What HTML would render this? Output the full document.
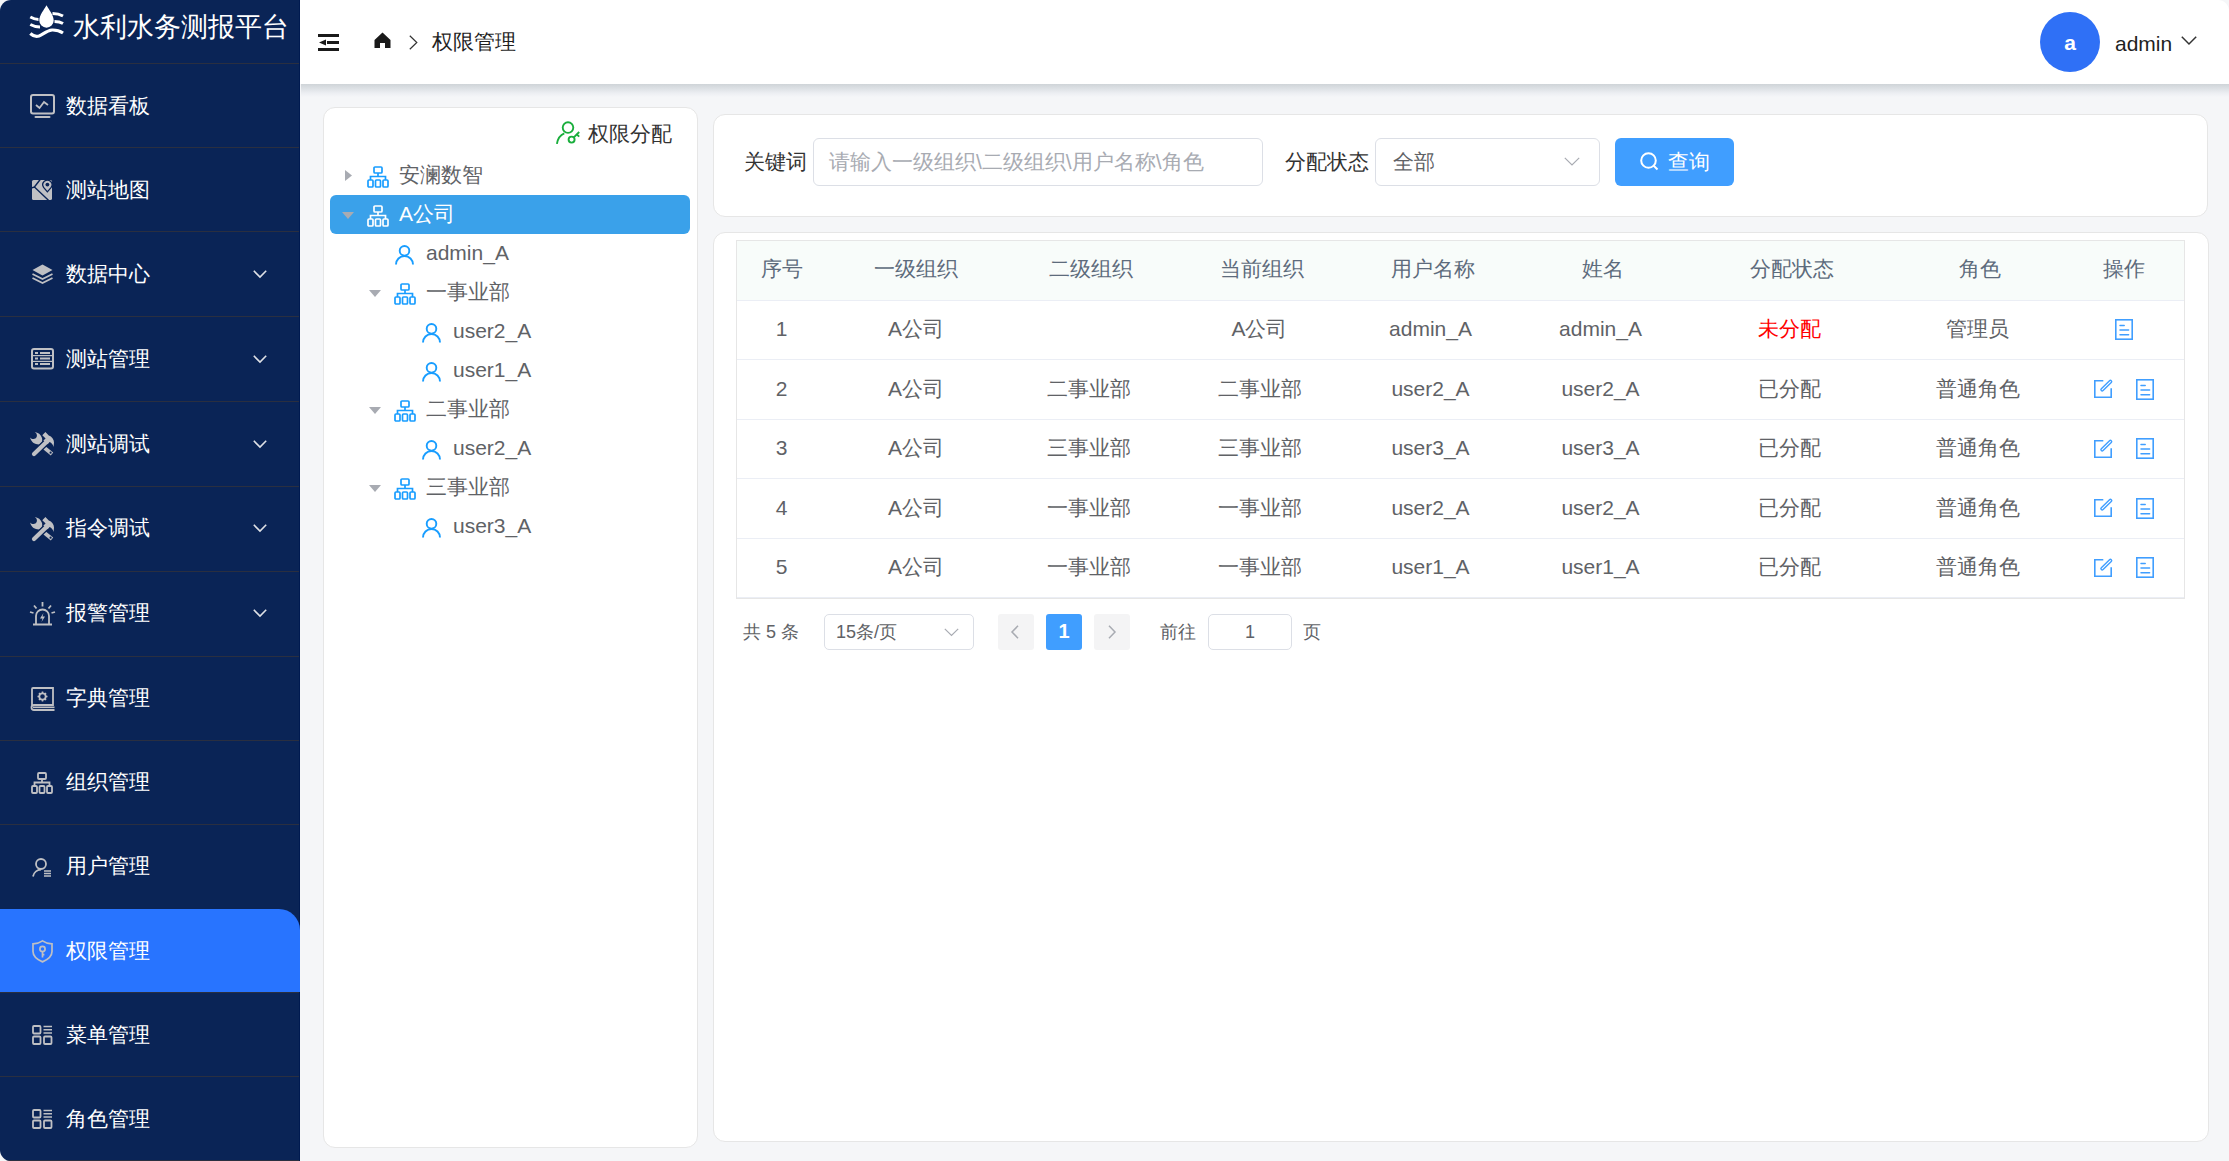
<!DOCTYPE html><html><head><meta charset="utf-8"><style>
*{box-sizing:border-box;margin:0;padding:0}
html,body{width:2229px;height:1161px;overflow:hidden;background:#f5f6f8;font-family:"Liberation Sans",sans-serif;}
#side{position:absolute;left:0;top:0;width:300px;height:1161px;background:#0a2456;border-radius:11px 0 0 11px;overflow:hidden}
#side .edge{position:absolute;right:0;top:0;width:1px;height:100%;background:#001a50}
.logo{position:absolute;left:30px;top:5px}
.title{position:absolute;left:73px;top:9px;font-size:27px;line-height:36px;color:#fff;white-space:nowrap}
.sep{position:absolute;left:0;width:299px;height:1px;background:#2a2f40}
.mi{position:absolute;left:0;width:299px;height:84px}
.mi .t{position:absolute;left:66px;top:0;line-height:84px;font-size:21px;color:#fff;white-space:nowrap}
.mi svg{position:absolute}
.mi.act{background:#2874ff;border-top-right-radius:21px;width:300px}
#hdr{position:absolute;left:300px;top:0;width:1929px;height:84px;background:#fff;border-top-right-radius:11px;}
#hsh{position:absolute;left:301px;top:84px;width:1928px;height:13px;background:linear-gradient(#cfd4d8,#dde1e5 35%,#eceef2 70%,#f5f6f8)}
.panel{position:absolute;background:#fff;border:1px solid #e6e6e6;border-radius:12px}
.tn{position:absolute;height:39px;line-height:39px;font-size:21px;color:#606266;white-space:nowrap}
.th{position:absolute;top:240px;height:60px;line-height:60px;font-size:21px;color:#606266;text-align:center;white-space:nowrap}
.td{position:absolute;height:59px;line-height:59px;font-size:21px;color:#606266;text-align:center;white-space:nowrap}
.hl{position:absolute;height:1px;background:#ebeef5}
.txt{position:absolute;white-space:nowrap}
svg{position:absolute;overflow:visible}
</style></head><body>
<div id="side"><div class="edge"></div>
<svg style="left:30px;top:5px" width="34" height="34" viewBox="0 0 34 34">
<path d="M16.5 0.3 C14 5 9.3 10 9.3 15.5 A7.2 7.2 0 0 0 23.7 15.5 C23.7 10 19 5 16.5 0.3Z" fill="#fff"/>
<path d="M0.3 12 C3 13.5 5.5 14.5 8.5 14.5" stroke="#fff" stroke-width="3" fill="none"/>
<path d="M0.3 19.5 C3 21 6 22 10 22" stroke="#fff" stroke-width="3" fill="none"/>
<path d="M22.5 8.5 C26 8.5 29.5 9 33 11" stroke="#fff" stroke-width="3" fill="none"/>
<path d="M24.5 16.5 C27.5 16.5 30.5 17 33 18.5" stroke="#fff" stroke-width="3" fill="none"/>
<path d="M0.3 28.5 C3 31 6 32 9 31 C13 29.5 16.5 25.5 22 25 C27 24.8 30 26 33 28" stroke="#fff" stroke-width="3.2" fill="none"/>
</svg>
<div class="title">水利水务测报平台</div>
<div class="sep" style="top:63.00px"></div>
<div class="mi" style="top:63.50px;height:83.56px"><div class="t" style="line-height:83.56px">数据看板</div></div>
<div class="sep" style="top:147.06px"></div>
<div class="mi" style="top:147.56px;height:83.56px"><div class="t" style="line-height:83.56px">测站地图</div></div>
<div class="sep" style="top:231.12px"></div>
<div class="mi" style="top:231.62px;height:84.44px"><div class="t" style="line-height:84.44px">数据中心</div></div>
<svg style="left:253px;top:269.62px" width="14" height="8" viewBox="0 0 14 8"><path d="M0.8 0.8 L7 7 L13.2 0.8" stroke="#dfe1e6" stroke-width="1.6" fill="none"/></svg>
<div class="sep" style="top:316.06px"></div>
<div class="mi" style="top:316.56px;height:84.44px"><div class="t" style="line-height:84.44px">测站管理</div></div>
<svg style="left:253px;top:354.56px" width="14" height="8" viewBox="0 0 14 8"><path d="M0.8 0.8 L7 7 L13.2 0.8" stroke="#dfe1e6" stroke-width="1.6" fill="none"/></svg>
<div class="sep" style="top:401.00px"></div>
<div class="mi" style="top:401.50px;height:84.44px"><div class="t" style="line-height:84.44px">测站调试</div></div>
<svg style="left:253px;top:439.50px" width="14" height="8" viewBox="0 0 14 8"><path d="M0.8 0.8 L7 7 L13.2 0.8" stroke="#dfe1e6" stroke-width="1.6" fill="none"/></svg>
<div class="sep" style="top:485.94px"></div>
<div class="mi" style="top:486.44px;height:84.44px"><div class="t" style="line-height:84.44px">指令调试</div></div>
<svg style="left:253px;top:524.44px" width="14" height="8" viewBox="0 0 14 8"><path d="M0.8 0.8 L7 7 L13.2 0.8" stroke="#dfe1e6" stroke-width="1.6" fill="none"/></svg>
<div class="sep" style="top:570.88px"></div>
<div class="mi" style="top:571.38px;height:84.44px"><div class="t" style="line-height:84.44px">报警管理</div></div>
<svg style="left:253px;top:609.38px" width="14" height="8" viewBox="0 0 14 8"><path d="M0.8 0.8 L7 7 L13.2 0.8" stroke="#dfe1e6" stroke-width="1.6" fill="none"/></svg>
<div class="sep" style="top:655.82px"></div>
<div class="mi" style="top:656.32px;height:83.56px"><div class="t" style="line-height:83.56px">字典管理</div></div>
<div class="sep" style="top:739.88px"></div>
<div class="mi" style="top:740.38px;height:83.56px"><div class="t" style="line-height:83.56px">组织管理</div></div>
<div class="sep" style="top:823.94px"></div>
<div class="mi" style="top:824.44px;height:83.56px"><div class="t" style="line-height:83.56px">用户管理</div></div>
<div class="mi act" style="top:908.50px;height:83.56px"><div class="t" style="line-height:83.56px">权限管理</div></div>
<div class="sep" style="top:992.06px"></div>
<div class="mi" style="top:992.56px;height:83.56px"><div class="t" style="line-height:83.56px">菜单管理</div></div>
<div class="sep" style="top:1076.12px"></div>
<div class="mi" style="top:1076.62px;height:83.56px"><div class="t" style="line-height:83.56px">角色管理</div></div>
<div class="sep" style="top:1160.18px"></div>
<svg style="left:30px;top:94px" width="25" height="25" viewBox="0 0 25 25">
<rect x="1" y="1" width="23" height="18.5" rx="2" stroke="#bfc0c4" stroke-width="2" fill="none"/>
<path d="M6 11 L9.5 14 L14 8 L18 11" stroke="#bfc0c4" stroke-width="1.8" fill="none"/>
<rect x="4.5" y="22" width="16" height="2" rx="1" fill="#bfc0c4"/></svg>
<svg style="left:32px;top:180px" width="20" height="20" viewBox="0 0 20 20">
<rect x="0" y="0" width="20" height="20" rx="1.6" fill="#bfc0c4"/>
<path d="M8.6 -1 L2.4 7 L17.2 21 M2.4 7 L-1 8.2" stroke="#0a2456" stroke-width="1.4" fill="none"/>
<path d="M15.4 11.8 L11.6 7.4 A4.6 4.6 0 1 1 19.2 7.4 Z" fill="#bfc0c4" stroke="#0a2456" stroke-width="1.3"/>
<circle cx="15.4" cy="4.6" r="1.9" fill="#0a2456"/></svg>
<svg style="left:32px;top:264px" width="21" height="20" viewBox="0 0 21 20">
<path d="M10.5 0.5 L20.5 6 L10.5 11.5 L0.5 6Z" fill="#bfc0c4"/>
<path d="M0.5 10 L10.5 15 L20.5 10" stroke="#bfc0c4" stroke-width="1.8" fill="none"/>
<path d="M0.5 14 L10.5 19 L20.5 14" stroke="#bfc0c4" stroke-width="1.8" fill="none"/></svg>
<svg style="left:31px;top:348px" width="23" height="22" viewBox="0 0 23 22">
<rect x="1" y="1" width="21" height="19.5" rx="2" stroke="#bfc0c4" stroke-width="2" fill="none"/>
<rect x="4" y="4" width="3" height="2" fill="#bfc0c4"/><rect x="9" y="4" width="10" height="2" fill="#bfc0c4"/>
<rect x="4" y="9.5" width="3" height="2" fill="#bfc0c4"/><rect x="9" y="9.5" width="10" height="2" fill="#bfc0c4"/>
<rect x="4" y="15" width="3" height="2" fill="#bfc0c4"/><rect x="9" y="15" width="10" height="2" fill="#bfc0c4"/>
<rect x="1" y="7" width="21" height="1.2" fill="#bfc0c4"/><rect x="1" y="12.8" width="21" height="1.2" fill="#bfc0c4"/></svg>
<svg style="left:30px;top:432px" width="24" height="24" viewBox="0 0 24 24">
<path d="M0 5.5 C1.5 7 3.5 7.6 5.4 6.6 C7 5.6 7.4 3.4 6.4 1.6 L4.8 0 C8 0.4 11 2.6 12 6 C12.4 8 12.2 9.4 11.6 10.6 L9.2 12.4 C5.6 12.6 1.6 11 0 5.5Z" fill="#bfc0c4"/>
<path d="M14.2 13.2 L23.2 20.6 L20.8 23.6 L11.6 16Z" fill="#bfc0c4"/>
<circle cx="20.6" cy="20.7" r="1.1" fill="#0a2456"/>
<path d="M4 22 L17 9.5" stroke="#0a2456" stroke-width="6.6" stroke-linecap="round"/>
<path d="M4 22 L17 9.5" stroke="#bfc0c4" stroke-width="4.2" stroke-linecap="round"/>
<path d="M12.3 3.2 L15.4 0.1 L18.8 3.4 C21.8 4.6 24 7 24 10.5 L23.6 15 C23 12.6 21.6 10.8 19.6 10 L17.6 12.2 L13.4 8.6 L15.6 6.4 Z" fill="#bfc0c4"/>
</svg>
<svg style="left:30px;top:517px" width="24" height="24" viewBox="0 0 24 24">
<path d="M0 5.5 C1.5 7 3.5 7.6 5.4 6.6 C7 5.6 7.4 3.4 6.4 1.6 L4.8 0 C8 0.4 11 2.6 12 6 C12.4 8 12.2 9.4 11.6 10.6 L9.2 12.4 C5.6 12.6 1.6 11 0 5.5Z" fill="#bfc0c4"/>
<path d="M14.2 13.2 L23.2 20.6 L20.8 23.6 L11.6 16Z" fill="#bfc0c4"/>
<circle cx="20.6" cy="20.7" r="1.1" fill="#0a2456"/>
<path d="M4 22 L17 9.5" stroke="#0a2456" stroke-width="6.6" stroke-linecap="round"/>
<path d="M4 22 L17 9.5" stroke="#bfc0c4" stroke-width="4.2" stroke-linecap="round"/>
<path d="M12.3 3.2 L15.4 0.1 L18.8 3.4 C21.8 4.6 24 7 24 10.5 L23.6 15 C23 12.6 21.6 10.8 19.6 10 L17.6 12.2 L13.4 8.6 L15.6 6.4 Z" fill="#bfc0c4"/>
</svg>
<svg style="left:30px;top:602px" width="25" height="24" viewBox="0 0 25 24">
<path d="M6 22 V14 A6.5 6.5 0 0 1 19 14 V22" stroke="#bfc0c4" stroke-width="1.8" fill="none"/>
<rect x="3" y="21.5" width="19" height="2" fill="#bfc0c4"/>
<path d="M13.5 11 L10 16.5 H12.5 L11.5 20 L15 14.5 H12.5Z" fill="#bfc0c4"/>
<rect x="11.6" y="0" width="1.8" height="4.5" fill="#bfc0c4"/>
<path d="M4 3.5 L6.5 6.5 M21 3.5 L18.5 6.5 M0 10 L3.5 11 M25 10 L21.5 11" stroke="#bfc0c4" stroke-width="1.8"/></svg>
<svg style="left:30px;top:687px" width="25" height="24" viewBox="0 0 25 24">
<path d="M2 19 V2 A1 1 0 0 1 3 1 H23 V18 H4 A2.5 2.5 0 0 0 4 23 H24.5" stroke="#bfc0c4" stroke-width="1.8" fill="none"/>
<rect x="3" y="19.5" width="21.5" height="1.6" fill="#bfc0c4"/>
<circle cx="12.5" cy="9.5" r="3.2" stroke="#bfc0c4" stroke-width="1.8" fill="none"/>
<path d="M12.5 4.5 V6 M12.5 13 V14.5 M7.5 9.5 H9 M16 9.5 H17.5 M9 6 L10 7 M15 12 L16 13 M16 6 L15 7 M10 12 L9 13" stroke="#bfc0c4" stroke-width="1.6"/></svg>
<svg style="left:31px;top:772px" width="22.0" height="22.0" viewBox="0 0 22 22">
<rect x="7" y="1" width="8" height="6" rx="1" stroke="#bfc0c4" stroke-width="1.8" fill="none"/>
<path d="M11 7 V10.5 M3.5 14 V10.5 H18.5 V14" stroke="#bfc0c4" stroke-width="1.8" fill="none"/>
<rect x="1" y="14" width="5" height="7" rx="1" stroke="#bfc0c4" stroke-width="1.8" fill="none"/>
<rect x="8.5" y="14" width="5" height="7" rx="1" stroke="#bfc0c4" stroke-width="1.8" fill="none"/>
<rect x="16" y="14" width="5" height="7" rx="1" stroke="#bfc0c4" stroke-width="1.8" fill="none"/></svg>
<svg style="left:32px;top:858px" width="20" height="19" viewBox="0 0 20 19">
<circle cx="9" cy="6" r="5" stroke="#bfc0c4" stroke-width="1.8" fill="none"/>
<path d="M1 18.5 A8.5 8.5 0 0 1 9 11.5" stroke="#bfc0c4" stroke-width="1.8" fill="none"/>
<path d="M12 13 H19 M12 15.5 H19 M12 18 H19" stroke="#bfc0c4" stroke-width="1.5"/></svg>
<svg style="left:32px;top:940px" width="21" height="23" viewBox="0 0 21 23">
<path d="M10.5 0.9 C8 2.7 5 3.7 1 3.9 V11.5 C1 16 5 19.5 10.5 21.9 C16 19.5 20 16 20 11.5 V3.9 C16 3.7 13 2.7 10.5 0.9Z" stroke="#bfc0c4" stroke-width="1.7" fill="none"/>
<circle cx="10.5" cy="8.9" r="2.6" stroke="#bfc0c4" stroke-width="1.7" fill="none"/>
<path d="M10.5 11.5 V17.6 M10.5 14.6 H12.4" stroke="#bfc0c4" stroke-width="1.7"/></svg>
<svg style="left:32px;top:1025px" width="21" height="20" viewBox="0 0 21 20">
<rect x="1" y="1" width="7.5" height="7.5" rx="1" stroke="#bfc0c4" stroke-width="1.8" fill="none"/>
<rect x="1" y="11.5" width="7.5" height="7.5" rx="1" stroke="#bfc0c4" stroke-width="1.8" fill="none"/>
<rect x="12" y="11.5" width="7.5" height="7.5" rx="1" stroke="#bfc0c4" stroke-width="1.8" fill="none"/>
<path d="M11.5 1.5 H20 M11.5 4.8 H20 M11.5 8 H20" stroke="#bfc0c4" stroke-width="1.6"/></svg>
<svg style="left:32px;top:1109px" width="21" height="20" viewBox="0 0 21 20">
<rect x="1" y="1" width="7.5" height="7.5" rx="1" stroke="#bfc0c4" stroke-width="1.8" fill="none"/>
<rect x="1" y="11.5" width="7.5" height="7.5" rx="1" stroke="#bfc0c4" stroke-width="1.8" fill="none"/>
<rect x="12" y="11.5" width="7.5" height="7.5" rx="1" stroke="#bfc0c4" stroke-width="1.8" fill="none"/>
<path d="M11.5 1.5 H20 M11.5 4.8 H20 M11.5 8 H20" stroke="#bfc0c4" stroke-width="1.6"/></svg>
</div>
<div id="hsh"></div><div id="hdr"></div>
<svg style="left:318px;top:34px" width="22" height="17" viewBox="0 0 22 17">
<rect x="0" y="0" width="21" height="3" fill="#1a1a1a"/>
<rect x="9" y="7" width="12" height="3" fill="#1a1a1a"/>
<path d="M1 8.5 L8 5.5 V11.5Z" fill="#1a1a1a"/>
<rect x="0" y="14" width="21" height="3" fill="#1a1a1a"/></svg>
<svg style="left:374px;top:32px" width="17" height="17" viewBox="0 0 17 17">
<path d="M8.5 0.5 L16.5 8 V16 H11 V11 H6 V16 H0.5 V8Z" fill="#1a1a1a"/></svg>
<svg style="left:409px;top:35px" width="9" height="15" viewBox="0 0 9 15">
<path d="M0.8 0.8 L7.8 7.5 L0.8 14.2" stroke="#333" stroke-width="1.2" fill="none"/></svg>
<div class="txt" style="left:432px;top:27px;font-size:21px;line-height:30px;color:#1f1f1f">权限管理</div>
<div style="position:absolute;left:2040px;top:12px;width:60px;height:60px;border-radius:50%;background:#2f70f6"></div>
<div class="txt" style="left:2040px;width:60px;text-align:center;top:28px;font-size:21px;line-height:30px;color:#fff;font-weight:bold">a</div>
<div class="txt" style="left:2115px;top:29px;font-size:21px;line-height:30px;color:#1f1f1f">admin</div>
<svg style="left:2181px;top:36px" width="16" height="9" viewBox="0 0 16 9">
<path d="M0.8 0.8 L8 8 L15.2 0.8" stroke="#333" stroke-width="1.5" fill="none"/></svg>
<div class="panel" style="left:323px;top:107px;width:375px;height:1041px"></div>
<svg style="left:556px;top:121px" width="25" height="24" viewBox="0 0 25 24">
<circle cx="12" cy="6.6" r="5.3" stroke="#19ae3c" stroke-width="1.9" fill="none"/>
<path d="M0.9 22.8 C1.8 17.5 4.5 13.8 8.3 12.3" stroke="#19ae3c" stroke-width="1.9" fill="none"/>
<circle cx="15.6" cy="18.6" r="3" stroke="#19ae3c" stroke-width="1.9" fill="none"/>
<path d="M17.8 16.4 L23.2 11 M21 13.6 L23.2 15.6" stroke="#19ae3c" stroke-width="1.9" fill="none"/></svg>
<div class="txt" style="left:588px;top:119px;font-size:21px;line-height:30px;color:#333">权限分配</div>
<div style="position:absolute;left:330px;top:195px;width:360px;height:39px;border-radius:6px;background:#3aa1ea"></div>
<svg style="left:345px;top:170.0px" width="7" height="11" viewBox="0 0 7 11"><path d="M0 0 V11 L7 5.5Z" fill="#a8abb2"/></svg>
<svg style="left:367px;top:166px" width="22.0" height="22.0" viewBox="0 0 22 22">
<rect x="7" y="1" width="8" height="6" rx="1" stroke="#189dff" stroke-width="1.7" fill="none"/>
<path d="M11 7 V10.5 M3.5 14 V10.5 H18.5 V14" stroke="#189dff" stroke-width="1.7" fill="none"/>
<rect x="1" y="14" width="5" height="7" rx="1" stroke="#189dff" stroke-width="1.7" fill="none"/>
<rect x="8.5" y="14" width="5" height="7" rx="1" stroke="#189dff" stroke-width="1.7" fill="none"/>
<rect x="16" y="14" width="5" height="7" rx="1" stroke="#189dff" stroke-width="1.7" fill="none"/></svg>
<div class="txt" style="left:399px;top:160px;font-size:21px;line-height:30px;color:#606266">安澜数智</div>
<svg style="left:342px;top:212.0px" width="12" height="7" viewBox="0 0 12 7"><path d="M0 0 H12 L6 7Z" fill="#a8abb2"/></svg>
<svg style="left:367px;top:205px" width="22.0" height="22.0" viewBox="0 0 22 22">
<rect x="7" y="1" width="8" height="6" rx="1" stroke="#fff" stroke-width="1.7" fill="none"/>
<path d="M11 7 V10.5 M3.5 14 V10.5 H18.5 V14" stroke="#fff" stroke-width="1.7" fill="none"/>
<rect x="1" y="14" width="5" height="7" rx="1" stroke="#fff" stroke-width="1.7" fill="none"/>
<rect x="8.5" y="14" width="5" height="7" rx="1" stroke="#fff" stroke-width="1.7" fill="none"/>
<rect x="16" y="14" width="5" height="7" rx="1" stroke="#fff" stroke-width="1.7" fill="none"/></svg>
<div class="txt" style="left:399px;top:199px;font-size:21px;line-height:30px;color:#fff">A公司</div>
<svg style="left:395px;top:244.5px" width="19" height="20" viewBox="0 0 19 20">
<circle cx="9.5" cy="5.8" r="4.8" stroke="#189dff" stroke-width="1.9" fill="none"/>
<path d="M1 19.5 A8.5 8.5 0 0 1 18 19.5" stroke="#189dff" stroke-width="1.9" fill="none"/></svg>
<div class="txt" style="left:426px;top:238px;font-size:21px;line-height:30px;color:#606266">admin_A</div>
<svg style="left:369px;top:290.0px" width="12" height="7" viewBox="0 0 12 7"><path d="M0 0 H12 L6 7Z" fill="#a8abb2"/></svg>
<svg style="left:394px;top:283px" width="22.0" height="22.0" viewBox="0 0 22 22">
<rect x="7" y="1" width="8" height="6" rx="1" stroke="#189dff" stroke-width="1.7" fill="none"/>
<path d="M11 7 V10.5 M3.5 14 V10.5 H18.5 V14" stroke="#189dff" stroke-width="1.7" fill="none"/>
<rect x="1" y="14" width="5" height="7" rx="1" stroke="#189dff" stroke-width="1.7" fill="none"/>
<rect x="8.5" y="14" width="5" height="7" rx="1" stroke="#189dff" stroke-width="1.7" fill="none"/>
<rect x="16" y="14" width="5" height="7" rx="1" stroke="#189dff" stroke-width="1.7" fill="none"/></svg>
<div class="txt" style="left:426px;top:277px;font-size:21px;line-height:30px;color:#606266">一事业部</div>
<svg style="left:422px;top:322.5px" width="19" height="20" viewBox="0 0 19 20">
<circle cx="9.5" cy="5.8" r="4.8" stroke="#189dff" stroke-width="1.9" fill="none"/>
<path d="M1 19.5 A8.5 8.5 0 0 1 18 19.5" stroke="#189dff" stroke-width="1.9" fill="none"/></svg>
<div class="txt" style="left:453px;top:316px;font-size:21px;line-height:30px;color:#606266">user2_A</div>
<svg style="left:422px;top:361.5px" width="19" height="20" viewBox="0 0 19 20">
<circle cx="9.5" cy="5.8" r="4.8" stroke="#189dff" stroke-width="1.9" fill="none"/>
<path d="M1 19.5 A8.5 8.5 0 0 1 18 19.5" stroke="#189dff" stroke-width="1.9" fill="none"/></svg>
<div class="txt" style="left:453px;top:355px;font-size:21px;line-height:30px;color:#606266">user1_A</div>
<svg style="left:369px;top:407.0px" width="12" height="7" viewBox="0 0 12 7"><path d="M0 0 H12 L6 7Z" fill="#a8abb2"/></svg>
<svg style="left:394px;top:400px" width="22.0" height="22.0" viewBox="0 0 22 22">
<rect x="7" y="1" width="8" height="6" rx="1" stroke="#189dff" stroke-width="1.7" fill="none"/>
<path d="M11 7 V10.5 M3.5 14 V10.5 H18.5 V14" stroke="#189dff" stroke-width="1.7" fill="none"/>
<rect x="1" y="14" width="5" height="7" rx="1" stroke="#189dff" stroke-width="1.7" fill="none"/>
<rect x="8.5" y="14" width="5" height="7" rx="1" stroke="#189dff" stroke-width="1.7" fill="none"/>
<rect x="16" y="14" width="5" height="7" rx="1" stroke="#189dff" stroke-width="1.7" fill="none"/></svg>
<div class="txt" style="left:426px;top:394px;font-size:21px;line-height:30px;color:#606266">二事业部</div>
<svg style="left:422px;top:439.5px" width="19" height="20" viewBox="0 0 19 20">
<circle cx="9.5" cy="5.8" r="4.8" stroke="#189dff" stroke-width="1.9" fill="none"/>
<path d="M1 19.5 A8.5 8.5 0 0 1 18 19.5" stroke="#189dff" stroke-width="1.9" fill="none"/></svg>
<div class="txt" style="left:453px;top:433px;font-size:21px;line-height:30px;color:#606266">user2_A</div>
<svg style="left:369px;top:485.0px" width="12" height="7" viewBox="0 0 12 7"><path d="M0 0 H12 L6 7Z" fill="#a8abb2"/></svg>
<svg style="left:394px;top:478px" width="22.0" height="22.0" viewBox="0 0 22 22">
<rect x="7" y="1" width="8" height="6" rx="1" stroke="#189dff" stroke-width="1.7" fill="none"/>
<path d="M11 7 V10.5 M3.5 14 V10.5 H18.5 V14" stroke="#189dff" stroke-width="1.7" fill="none"/>
<rect x="1" y="14" width="5" height="7" rx="1" stroke="#189dff" stroke-width="1.7" fill="none"/>
<rect x="8.5" y="14" width="5" height="7" rx="1" stroke="#189dff" stroke-width="1.7" fill="none"/>
<rect x="16" y="14" width="5" height="7" rx="1" stroke="#189dff" stroke-width="1.7" fill="none"/></svg>
<div class="txt" style="left:426px;top:472px;font-size:21px;line-height:30px;color:#606266">三事业部</div>
<svg style="left:422px;top:517.5px" width="19" height="20" viewBox="0 0 19 20">
<circle cx="9.5" cy="5.8" r="4.8" stroke="#189dff" stroke-width="1.9" fill="none"/>
<path d="M1 19.5 A8.5 8.5 0 0 1 18 19.5" stroke="#189dff" stroke-width="1.9" fill="none"/></svg>
<div class="txt" style="left:453px;top:511px;font-size:21px;line-height:30px;color:#606266">user3_A</div>
<div class="panel" style="left:713px;top:114px;width:1495px;height:103px"></div>
<div class="txt" style="left:744px;top:147px;font-size:21px;line-height:30px;color:#333">关键词</div>
<div style="position:absolute;left:813px;top:138px;width:450px;height:48px;border:1.5px solid #dcdfe6;border-radius:6px"></div>
<div class="txt" style="left:829px;top:147px;font-size:21px;line-height:30px;color:#a8abb2">请输入一级组织\二级组织\用户名称\角色</div>
<div class="txt" style="left:1285px;top:147px;font-size:21px;line-height:30px;color:#333">分配状态</div>
<div style="position:absolute;left:1375px;top:138px;width:225px;height:48px;border:1.5px solid #dcdfe6;border-radius:6px"></div>
<div class="txt" style="left:1393px;top:147px;font-size:21px;line-height:30px;color:#606266">全部</div>
<svg style="left:1564px;top:157px" width="16" height="9" viewBox="0 0 16 9"><path d="M0.8 0.8 L8 8 L15.2 0.8" stroke="#a8abb2" stroke-width="1.2" fill="none"/></svg>
<div style="position:absolute;left:1615px;top:138px;width:119px;height:48px;border-radius:6px;background:#409eff"></div>
<svg style="left:1640px;top:152px" width="19" height="19" viewBox="0 0 19 19"><circle cx="8.5" cy="8.5" r="7.3" stroke="#fff" stroke-width="2" fill="none"/><path d="M13.5 13.5 L17.5 17.5" stroke="#fff" stroke-width="2"/></svg>
<div class="txt" style="left:1668px;top:147px;font-size:21px;line-height:30px;color:#fff">查询</div>
<div class="panel" style="left:713px;top:232px;width:1496px;height:910px"></div>
<div style="position:absolute;left:736px;top:240px;width:1449px;height:359px;border:1px solid #e6e6e6"></div>
<div style="position:absolute;left:737px;top:241px;width:1447px;height:59px;background:#f8fcfa"></div>
<div class="txt" style="left:681.5px;width:200px;text-align:center;top:254px;font-size:21px;line-height:30px;color:#5d6b7c">序号</div>
<div class="txt" style="left:816.0px;width:200px;text-align:center;top:254px;font-size:21px;line-height:30px;color:#5d6b7c">一级组织</div>
<div class="txt" style="left:990.5px;width:200px;text-align:center;top:254px;font-size:21px;line-height:30px;color:#5d6b7c">二级组织</div>
<div class="txt" style="left:1161.5px;width:200px;text-align:center;top:254px;font-size:21px;line-height:30px;color:#5d6b7c">当前组织</div>
<div class="txt" style="left:1332.5px;width:200px;text-align:center;top:254px;font-size:21px;line-height:30px;color:#5d6b7c">用户名称</div>
<div class="txt" style="left:1502.5px;width:200px;text-align:center;top:254px;font-size:21px;line-height:30px;color:#5d6b7c">姓名</div>
<div class="txt" style="left:1691.5px;width:200px;text-align:center;top:254px;font-size:21px;line-height:30px;color:#5d6b7c">分配状态</div>
<div class="txt" style="left:1879.5px;width:200px;text-align:center;top:254px;font-size:21px;line-height:30px;color:#5d6b7c">角色</div>
<div class="txt" style="left:2024.0px;width:200px;text-align:center;top:254px;font-size:21px;line-height:30px;color:#5d6b7c">操作</div>
<div class="hl" style="left:737px;width:1447px;top:300.0px"></div>
<div class="hl" style="left:737px;width:1447px;top:359.0px"></div>
<div class="hl" style="left:737px;width:1447px;top:418.5px"></div>
<div class="hl" style="left:737px;width:1447px;top:478.0px"></div>
<div class="hl" style="left:737px;width:1447px;top:537.5px"></div>
<div class="hl" style="left:737px;width:1447px;top:597.0px"></div>
<div class="txt" style="left:681.5px;width:200px;text-align:center;top:314.0px;font-size:21px;line-height:30px;color:#606266">1</div>
<div class="txt" style="left:816.0px;width:200px;text-align:center;top:314.0px;font-size:21px;line-height:30px;color:#606266">A公司</div>
<div class="txt" style="left:988.5px;width:200px;text-align:center;top:314.0px;font-size:21px;line-height:30px;color:#606266"></div>
<div class="txt" style="left:1159.5px;width:200px;text-align:center;top:314.0px;font-size:21px;line-height:30px;color:#606266">A公司</div>
<div class="txt" style="left:1330.5px;width:200px;text-align:center;top:314.0px;font-size:21px;line-height:30px;color:#606266">admin_A</div>
<div class="txt" style="left:1500.5px;width:200px;text-align:center;top:314.0px;font-size:21px;line-height:30px;color:#606266">admin_A</div>
<div class="txt" style="left:1689.5px;width:200px;text-align:center;top:314.0px;font-size:21px;line-height:30px;color:#f00">未分配</div>
<div class="txt" style="left:1877.5px;width:200px;text-align:center;top:314.0px;font-size:21px;line-height:30px;color:#606266">管理员</div>
<svg style="left:2115px;top:319.4px" width="18" height="21" viewBox="0 0 18 21">
<rect x="0.8" y="0.8" width="16.4" height="19.4" stroke="#409eff" stroke-width="1.6" fill="none"/>
<path d="M5 6.6 H9.2 M5 11 H13.6 M5 15.7 H13.6" stroke="#409eff" stroke-width="1.5" stroke-linecap="round"/></svg>
<div class="txt" style="left:681.5px;width:200px;text-align:center;top:373.5px;font-size:21px;line-height:30px;color:#606266">2</div>
<div class="txt" style="left:816.0px;width:200px;text-align:center;top:373.5px;font-size:21px;line-height:30px;color:#606266">A公司</div>
<div class="txt" style="left:988.5px;width:200px;text-align:center;top:373.5px;font-size:21px;line-height:30px;color:#606266">二事业部</div>
<div class="txt" style="left:1159.5px;width:200px;text-align:center;top:373.5px;font-size:21px;line-height:30px;color:#606266">二事业部</div>
<div class="txt" style="left:1330.5px;width:200px;text-align:center;top:373.5px;font-size:21px;line-height:30px;color:#606266">user2_A</div>
<div class="txt" style="left:1500.5px;width:200px;text-align:center;top:373.5px;font-size:21px;line-height:30px;color:#606266">user2_A</div>
<div class="txt" style="left:1689.5px;width:200px;text-align:center;top:373.5px;font-size:21px;line-height:30px;color:#606266">已分配</div>
<div class="txt" style="left:1877.5px;width:200px;text-align:center;top:373.5px;font-size:21px;line-height:30px;color:#606266">普通角色</div>
<svg style="left:2094px;top:380.1px" width="19" height="19" viewBox="0 0 19 19">
<path d="M9.3 0.8 H0.8 V17.2 H17.2 V8.3" stroke="#409eff" stroke-width="1.6" fill="none"/>
<path d="M8.2 9.6 L16.4 1.6" stroke="#409eff" stroke-width="3.9" stroke-linecap="round"/>
<path d="M8.2 9.6 L16.4 1.6" stroke="#fff" stroke-width="1.1" stroke-linecap="round"/></svg>
<svg style="left:2136px;top:378.7px" width="18" height="21" viewBox="0 0 18 21">
<rect x="0.8" y="0.8" width="16.4" height="19.4" stroke="#409eff" stroke-width="1.6" fill="none"/>
<path d="M5 6.6 H9.2 M5 11 H13.6 M5 15.7 H13.6" stroke="#409eff" stroke-width="1.5" stroke-linecap="round"/></svg>
<div class="txt" style="left:681.5px;width:200px;text-align:center;top:433.0px;font-size:21px;line-height:30px;color:#606266">3</div>
<div class="txt" style="left:816.0px;width:200px;text-align:center;top:433.0px;font-size:21px;line-height:30px;color:#606266">A公司</div>
<div class="txt" style="left:988.5px;width:200px;text-align:center;top:433.0px;font-size:21px;line-height:30px;color:#606266">三事业部</div>
<div class="txt" style="left:1159.5px;width:200px;text-align:center;top:433.0px;font-size:21px;line-height:30px;color:#606266">三事业部</div>
<div class="txt" style="left:1330.5px;width:200px;text-align:center;top:433.0px;font-size:21px;line-height:30px;color:#606266">user3_A</div>
<div class="txt" style="left:1500.5px;width:200px;text-align:center;top:433.0px;font-size:21px;line-height:30px;color:#606266">user3_A</div>
<div class="txt" style="left:1689.5px;width:200px;text-align:center;top:433.0px;font-size:21px;line-height:30px;color:#606266">已分配</div>
<div class="txt" style="left:1877.5px;width:200px;text-align:center;top:433.0px;font-size:21px;line-height:30px;color:#606266">普通角色</div>
<svg style="left:2094px;top:439.6px" width="19" height="19" viewBox="0 0 19 19">
<path d="M9.3 0.8 H0.8 V17.2 H17.2 V8.3" stroke="#409eff" stroke-width="1.6" fill="none"/>
<path d="M8.2 9.6 L16.4 1.6" stroke="#409eff" stroke-width="3.9" stroke-linecap="round"/>
<path d="M8.2 9.6 L16.4 1.6" stroke="#fff" stroke-width="1.1" stroke-linecap="round"/></svg>
<svg style="left:2136px;top:438.2px" width="18" height="21" viewBox="0 0 18 21">
<rect x="0.8" y="0.8" width="16.4" height="19.4" stroke="#409eff" stroke-width="1.6" fill="none"/>
<path d="M5 6.6 H9.2 M5 11 H13.6 M5 15.7 H13.6" stroke="#409eff" stroke-width="1.5" stroke-linecap="round"/></svg>
<div class="txt" style="left:681.5px;width:200px;text-align:center;top:492.5px;font-size:21px;line-height:30px;color:#606266">4</div>
<div class="txt" style="left:816.0px;width:200px;text-align:center;top:492.5px;font-size:21px;line-height:30px;color:#606266">A公司</div>
<div class="txt" style="left:988.5px;width:200px;text-align:center;top:492.5px;font-size:21px;line-height:30px;color:#606266">一事业部</div>
<div class="txt" style="left:1159.5px;width:200px;text-align:center;top:492.5px;font-size:21px;line-height:30px;color:#606266">一事业部</div>
<div class="txt" style="left:1330.5px;width:200px;text-align:center;top:492.5px;font-size:21px;line-height:30px;color:#606266">user2_A</div>
<div class="txt" style="left:1500.5px;width:200px;text-align:center;top:492.5px;font-size:21px;line-height:30px;color:#606266">user2_A</div>
<div class="txt" style="left:1689.5px;width:200px;text-align:center;top:492.5px;font-size:21px;line-height:30px;color:#606266">已分配</div>
<div class="txt" style="left:1877.5px;width:200px;text-align:center;top:492.5px;font-size:21px;line-height:30px;color:#606266">普通角色</div>
<svg style="left:2094px;top:499.1px" width="19" height="19" viewBox="0 0 19 19">
<path d="M9.3 0.8 H0.8 V17.2 H17.2 V8.3" stroke="#409eff" stroke-width="1.6" fill="none"/>
<path d="M8.2 9.6 L16.4 1.6" stroke="#409eff" stroke-width="3.9" stroke-linecap="round"/>
<path d="M8.2 9.6 L16.4 1.6" stroke="#fff" stroke-width="1.1" stroke-linecap="round"/></svg>
<svg style="left:2136px;top:497.7px" width="18" height="21" viewBox="0 0 18 21">
<rect x="0.8" y="0.8" width="16.4" height="19.4" stroke="#409eff" stroke-width="1.6" fill="none"/>
<path d="M5 6.6 H9.2 M5 11 H13.6 M5 15.7 H13.6" stroke="#409eff" stroke-width="1.5" stroke-linecap="round"/></svg>
<div class="txt" style="left:681.5px;width:200px;text-align:center;top:552.0px;font-size:21px;line-height:30px;color:#606266">5</div>
<div class="txt" style="left:816.0px;width:200px;text-align:center;top:552.0px;font-size:21px;line-height:30px;color:#606266">A公司</div>
<div class="txt" style="left:988.5px;width:200px;text-align:center;top:552.0px;font-size:21px;line-height:30px;color:#606266">一事业部</div>
<div class="txt" style="left:1159.5px;width:200px;text-align:center;top:552.0px;font-size:21px;line-height:30px;color:#606266">一事业部</div>
<div class="txt" style="left:1330.5px;width:200px;text-align:center;top:552.0px;font-size:21px;line-height:30px;color:#606266">user1_A</div>
<div class="txt" style="left:1500.5px;width:200px;text-align:center;top:552.0px;font-size:21px;line-height:30px;color:#606266">user1_A</div>
<div class="txt" style="left:1689.5px;width:200px;text-align:center;top:552.0px;font-size:21px;line-height:30px;color:#606266">已分配</div>
<div class="txt" style="left:1877.5px;width:200px;text-align:center;top:552.0px;font-size:21px;line-height:30px;color:#606266">普通角色</div>
<svg style="left:2094px;top:558.6px" width="19" height="19" viewBox="0 0 19 19">
<path d="M9.3 0.8 H0.8 V17.2 H17.2 V8.3" stroke="#409eff" stroke-width="1.6" fill="none"/>
<path d="M8.2 9.6 L16.4 1.6" stroke="#409eff" stroke-width="3.9" stroke-linecap="round"/>
<path d="M8.2 9.6 L16.4 1.6" stroke="#fff" stroke-width="1.1" stroke-linecap="round"/></svg>
<svg style="left:2136px;top:557.2px" width="18" height="21" viewBox="0 0 18 21">
<rect x="0.8" y="0.8" width="16.4" height="19.4" stroke="#409eff" stroke-width="1.6" fill="none"/>
<path d="M5 6.6 H9.2 M5 11 H13.6 M5 15.7 H13.6" stroke="#409eff" stroke-width="1.5" stroke-linecap="round"/></svg>
<div class="txt" style="left:743px;top:618px;font-size:18px;line-height:28px;color:#606266">共 5 条</div>
<div style="position:absolute;left:824px;top:614px;width:150px;height:36px;border:1.5px solid #dcdfe6;border-radius:5px"></div>
<div class="txt" style="left:836px;top:618px;font-size:18px;line-height:28px;color:#606266">15条/页</div>
<svg style="left:944px;top:628px" width="15" height="9" viewBox="0 0 15 9"><path d="M0.8 0.8 L7.5 7.5 L14.2 0.8" stroke="#a8abb2" stroke-width="1.2" fill="none"/></svg>
<div style="position:absolute;left:998px;top:614px;width:36px;height:36px;border-radius:3px;background:#f4f4f5"></div>
<svg style="left:1011px;top:625px" width="8" height="14" viewBox="0 0 8 14"><path d="M7 0.8 L1 7 L7 13.2" stroke="#a8abb2" stroke-width="1.5" fill="none"/></svg>
<div style="position:absolute;left:1046px;top:614px;width:36px;height:36px;border-radius:3px;background:#409eff"></div>
<div class="txt" style="left:1046px;width:36px;text-align:center;top:617px;font-size:20px;line-height:28px;color:#fff;font-weight:bold">1</div>
<div style="position:absolute;left:1094px;top:614px;width:36px;height:36px;border-radius:3px;background:#f4f4f5"></div>
<svg style="left:1108px;top:625px" width="8" height="14" viewBox="0 0 8 14"><path d="M1 0.8 L7 7 L1 13.2" stroke="#a8abb2" stroke-width="1.5" fill="none"/></svg>
<div class="txt" style="left:1160px;top:618px;font-size:18px;line-height:28px;color:#606266">前往</div>
<div style="position:absolute;left:1208px;top:614px;width:84px;height:36px;border:1.5px solid #dcdfe6;border-radius:5px"></div>
<div class="txt" style="left:1208px;width:84px;text-align:center;top:618px;font-size:18px;line-height:28px;color:#606266">1</div>
<div class="txt" style="left:1303px;top:618px;font-size:18px;line-height:28px;color:#606266">页</div>
</body></html>
